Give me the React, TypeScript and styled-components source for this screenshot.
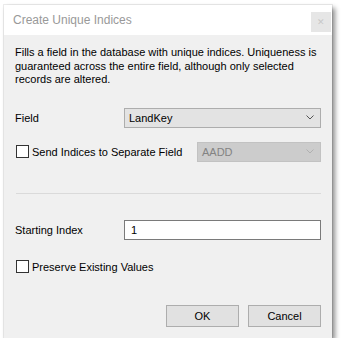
import React from 'react';
import styled, { createGlobalStyle } from 'styled-components';

const GlobalStyle = createGlobalStyle`
  html, body {
    margin: 0;
    padding: 0;
    background: #ffffff;
  }
  body {
    font-family: 'Liberation Sans', Arial, sans-serif;
  }
`;

const Window = styled.div`
  margin: 5px 0 0 4px;
  width: 328px;
  height: 333px;
  display: flex;
  flex-direction: column;
  background: #f0f0f0;
  box-shadow: 0 0 0 1px rgba(0, 0, 0, 0.07), 3px 3px 5px rgba(0, 0, 0, 0.45);
`;

const TitleBar = styled.header`
  height: 30px;
  background: #ffffff;
  display: flex;
  align-items: center;
  justify-content: space-between;
  padding-left: 9px;
  padding-right: 1px;
`;

const Title = styled.h1`
  margin: 0;
  font-size: 12px;
  font-weight: normal;
  color: #999999;
`;

const CloseButton = styled.div`
  width: 20px;
  height: 20px;
  margin-top: 3px;
  background: #e6e6e6;
  display: flex;
  align-items: center;
  justify-content: center;
  color: #c8c8c8;
  font-size: 9px;
`;

const Body = styled.main`
  flex: 1;
  display: flex;
  flex-direction: column;
  padding: 0 11px 11px;
  font-size: 11px;
  color: #000;
`;

const Description = styled.p`
  margin: 11px 0 0;
  line-height: 13.5px;
`;

const Row = styled.div<{ $top: number }>`
  display: flex;
  align-items: center;
  height: 20px;
  margin-top: ${p => p.$top}px;
`;

const Label = styled.span`
  width: 109px;
  flex-shrink: 0;
`;

const Combo = styled.div<{ $disabled?: boolean }>`
  flex: 1;
  height: 20px;
  box-sizing: border-box;
  display: flex;
  align-items: center;
  justify-content: space-between;
  padding: 0 6px 0 4px;
  background: ${p => (p.$disabled ? '#cccccc' : '#e3e3e3')};
  border: 1px solid ${p => (p.$disabled ? '#c2c2c2' : '#adadad')};
  color: ${p => (p.$disabled ? '#838383' : '#000')};
`;

const CheckLabel = styled.label`
  display: flex;
  align-items: center;
  gap: 3px;
`;

const Box = styled.span`
  width: 13px;
  height: 13px;
  box-sizing: border-box;
  margin-left: 1px;
  border: 1px solid #333;
  background: #fff;
`;

const SideCombo = styled(Combo)`
  flex: none;
  width: 124px;
  margin-left: auto;
`;

const Separator = styled.hr`
  margin: 31px 0 0 1px;
  border: none;
  border-top: 1px solid #dadada;
`;

const TextInput = styled.div`
  flex: 1;
  height: 20px;
  box-sizing: border-box;
  border: 1px solid #7a7a7a;
  background: #fff;
  display: flex;
  align-items: center;
  padding-left: 6px;
`;

const Footer = styled.footer`
  margin-top: auto;
  display: flex;
  justify-content: flex-end;
  gap: 9px;
`;

const Button = styled.button`
  width: 73px;
  height: 22px;
  box-sizing: border-box;
  background: #e1e1e1;
  border: 1px solid #adadad;
  font: inherit;
  color: #000;
  padding: 0;
`;

const Chevron: React.FC<{ color: string }> = ({ color }) => (
  <svg width="8" height="5" viewBox="0 0 8 5">
    <polyline points="0.5,0.5 4,4 7.5,0.5" fill="none" stroke={color} strokeWidth="1" />
  </svg>
);

const App: React.FC = () => (
  <>
    <GlobalStyle />
    <Window>
      <TitleBar>
        <Title>Create Unique Indices</Title>
        <CloseButton>✕</CloseButton>
      </TitleBar>
      <Body>
        <Description>
          Fills a field in the database with unique indices. Uniqueness is guaranteed across the
          entire field, although only selected records are altered.
        </Description>
        <Row $top={21}>
          <Label>Field</Label>
          <Combo>
            LandKey
            <Chevron color="#555" />
          </Combo>
        </Row>
        <Row $top={14}>
          <CheckLabel>
            <Box />
            Send Indices to Separate Field
          </CheckLabel>
          <SideCombo $disabled>
            AADD
            <Chevron color="#b0b0b0" />
          </SideCombo>
        </Row>
        <Separator />
        <Row $top={26}>
          <Label>Starting Index</Label>
          <TextInput>1</TextInput>
        </Row>
        <Row $top={17}>
          <CheckLabel>
            <Box />
            Preserve Existing Values
          </CheckLabel>
        </Row>
        <Footer>
          <Button>OK</Button>
          <Button>Cancel</Button>
        </Footer>
      </Body>
    </Window>
  </>
);

export default App;
